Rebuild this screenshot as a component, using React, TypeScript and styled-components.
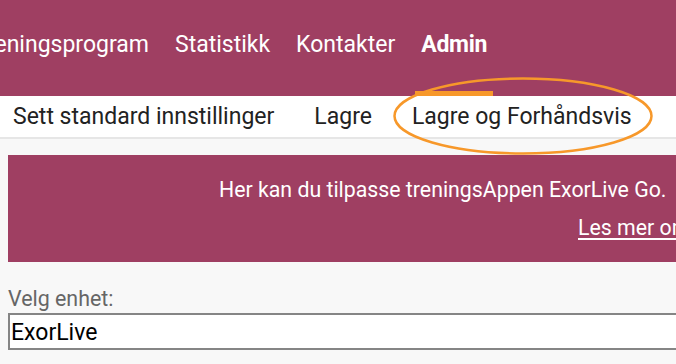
import React from "react";
import styled, { createGlobalStyle } from "styled-components";

const GlobalStyle = createGlobalStyle`
  html, body {
    margin: 0;
    padding: 0;
    background: #f8f8f8;
    overflow: hidden;
  }
  body {
    font-family: Roboto, "Liberation Sans", Arial, sans-serif;
    font-size: 20px;
    line-height: 24px;
  }
`;

const Page = styled.div`
  position: relative;
  width: 1200px;
`;

const Header = styled.header`
  display: flex;
  height: 96px;
  background: #9f3f62;
`;

const MainNav = styled.nav`
  display: flex;
  gap: 14px;
  margin-left: -32px;
`;

const NavItem = styled.a<{ $active?: boolean }>`
  box-sizing: border-box;
  height: 96px;
  padding: 31px 6px 0;
  color: #fff;
  font-size: 23px;
  line-height: 27px;
  font-weight: ${({ $active }) => ($active ? 700 : 400)};
  letter-spacing: ${({ $active }) => ($active ? "-0.3px" : "0")};
  text-decoration: none;
  white-space: nowrap;
  border-bottom: 5px solid ${({ $active }) => ($active ? "#f7982a" : "transparent")};
`;

const SubNav = styled.div`
  display: flex;
  gap: 40px;
  padding: 7px 0 7px 13px;
  background: #fff;
  border-bottom: 2px solid #e6e6e6;
`;

const SubNavItem = styled.a`
  color: #222;
  font-size: 23px;
  line-height: 27px;
  text-decoration: none;
  white-space: nowrap;
`;

const Content = styled.main`
  padding: 16px 8px 0;
`;

const Banner = styled.section`
  display: flex;
  flex-direction: column;
  align-items: flex-start;
  gap: 13px;
  padding: 22px 0 22px 211px;
  background: #9f3f62;
  color: #fff;
  font-size: 21.3px;
  line-height: 25px;
`;

const BannerText = styled.p`
  margin: 0;
  white-space: nowrap;
`;

const BannerLink = styled.a`
  margin-left: 359px;
  color: #fff;
  white-space: nowrap;
  text-decoration: underline;
  text-underline-offset: 3px;
`;

const Label = styled.label`
  display: block;
  margin-top: 24px;
  color: #666;
  font-size: 21.4px;
  line-height: 25px;
`;

const Select = styled.div`
  box-sizing: border-box;
  height: 37px;
  margin-top: 2px;
  padding: 4px 1px 0;
  background: #fff;
  border: 2px solid #858585;
  color: #000;
  font-size: 23px;
  line-height: 27px;
`;

const Highlight = styled.svg`
  position: absolute;
  left: 392px;
  top: 76px;
  pointer-events: none;
`;

export default function App() {
  return (
    <>
      <GlobalStyle />
      <Page>
        <Header>
          <MainNav>
            <NavItem>Treningsprogram</NavItem>
            <NavItem>Statistikk</NavItem>
            <NavItem>Kontakter</NavItem>
            <NavItem $active>Admin</NavItem>
          </MainNav>
        </Header>
        <SubNav>
          <SubNavItem>Sett standard innstillinger</SubNavItem>
          <SubNavItem>Lagre</SubNavItem>
          <SubNavItem>Lagre og Forhåndsvis</SubNavItem>
        </SubNav>
        <Content>
          <Banner>
            <BannerText>Her kan du tilpasse treningsAppen ExorLive Go.</BannerText>
            <BannerLink>Les mer om ExorLive Go</BannerLink>
          </Banner>
          <Label>Velg enhet:</Label>
          <Select>ExorLive</Select>
        </Content>
        <Highlight width="262" height="80" viewBox="0 0 262 80">
          <ellipse cx="131" cy="40" rx="128.5" ry="37.5" fill="none" stroke="#f7982a" strokeWidth="2.5" />
        </Highlight>
      </Page>
    </>
  );
}
